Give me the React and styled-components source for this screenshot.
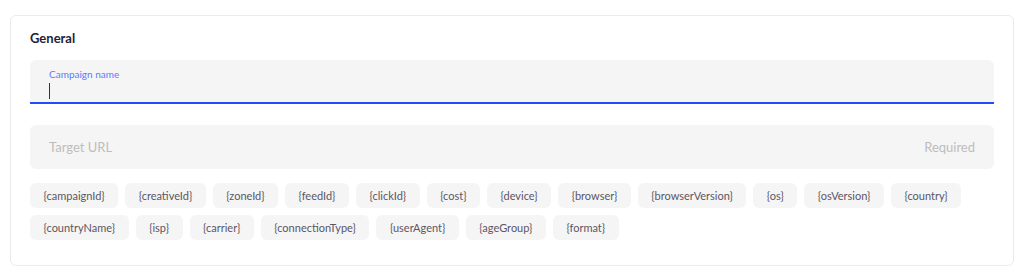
import React from 'react';
import styled, { createGlobalStyle } from 'styled-components';

const GlobalStyle = createGlobalStyle`
    body {
        margin: 0;
        background: #fff;
        font-family: Lato, "Noto Sans", sans-serif;
    }
`;

const Page = styled.div`
    padding: 15px 10px 13px 10px;
`;

const Card = styled.section`
    border: 1px solid #ebebeb;
    border-radius: 6px;
    padding: 13px 19px 25px 19px;
    display: flex;
    flex-direction: column;
`;

const Title = styled.h2`
    margin: 0 0 13px 0;
    font-size: 13px;
    font-weight: 700;
    color: #1f2233;
    line-height: 18px;
`;

const Field = styled.div`
    background: #f5f5f5;
    border-radius: ${({ focused }) => (focused ? '6px 6px 0 0' : '6px')};
    border-bottom: ${({ focused }) => (focused ? '2px solid #1f4cff' : 'none')};
    height: ${({ focused }) => (focused ? '44px' : '44px')};
    padding: 0 19px;
    box-sizing: border-box;
    display: flex;
    flex-direction: ${({ focused }) => (focused ? 'column' : 'row')};
    justify-content: ${({ focused }) => (focused ? 'flex-start' : 'space-between')};
    align-items: ${({ focused }) => (focused ? 'flex-start' : 'center')};
    margin-bottom: ${({ gap }) => gap}px;
`;

const Label = styled.span`
    font-size: 10px;
    color: #5b7cff;
    margin-top: 8px;
    line-height: 12px;
`;

const Caret = styled.span`
    display: block;
    width: 1px;
    height: 16px;
    background: #333;
    margin-top: 3px;
`;

const Placeholder = styled.span`
    font-size: 13px;
    color: #bdbdbd;
`;

const Chips = styled.div`
    display: flex;
    flex-wrap: wrap;
    gap: 7px 7px;
`;

const Chip = styled.span`
    background: #f5f5f5;
    border-radius: 6px;
    height: 25px;
    padding: 0 13.5px;
    display: inline-flex;
    align-items: center;
    font-size: 11px;
    color: #5c5563;
`;

const tokens = [
    'campaignId', 'creativeId', 'zoneId', 'feedId', 'clickId', 'cost', 'device',
    'browser', 'browserVersion', 'os', 'osVersion', 'country', 'countryName', 'isp',
    'carrier', 'connectionType', 'userAgent', 'ageGroup', 'format',
];

const App = () => (
    <Page>
        <GlobalStyle />
        <Card>
            <Title>General</Title>
            <Field focused gap={21}>
                <Label>Campaign name</Label>
                <Caret />
            </Field>
            <Field gap={14}>
                <Placeholder>Target URL</Placeholder>
                <Placeholder>Required</Placeholder>
            </Field>
            <Chips>
                {tokens.map((t) => (
                    <Chip key={t}>{`{${t}}`}</Chip>
                ))}
            </Chips>
        </Card>
    </Page>
);

export default App;
